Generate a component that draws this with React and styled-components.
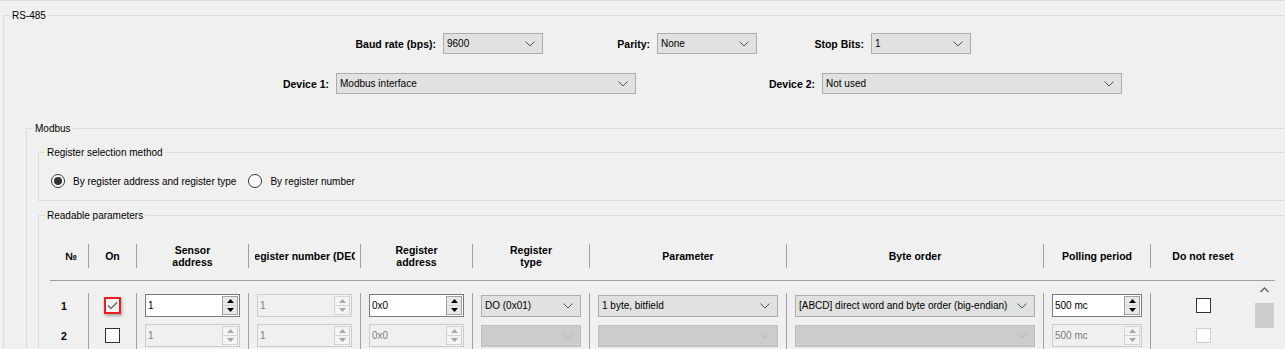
import React from 'react';
import styled, { createGlobalStyle } from 'styled-components';

const GlobalStyle = createGlobalStyle`
  html, body { margin: 0; padding: 0; background: #f0f0f0; overflow: hidden; }
  body { font-family: "Liberation Sans", Arial, sans-serif; font-size: 10px; color: #000; }
  #root { width: 1285px; height: 349px; overflow: hidden; }
`;

const Page = styled.div`
  width: 1285px;
  height: 349px;
  box-sizing: border-box;
  border-top: 1px solid #dadada;
  overflow: hidden;
`;

const Group = styled.fieldset`
  margin: ${p => p.$top}px 0 0 ${p => p.$left || 0}px;
  padding: 0;
  border: 1px solid #dcdcdc;
  border-right: none;
  border-bottom: ${p => (p.$closed ? '1px solid #dcdcdc' : 'none')};
  min-width: 0;
`;

const Legend = styled.legend`
  margin-left: 6px;
  padding: 0 2px;
  font-size: 10px;
  line-height: 13px;
  height: 13px;
`;

const GroupBody = styled.div`
  padding: ${p => p.$pad};
`;

const FormRow = styled.div`
  display: flex;
  align-items: center;
  margin: ${p => p.$mt || 0}px 0 0 ${p => p.$ml}px;
`;

const FieldLabel = styled.label`
  width: ${p => p.$w}px;
  box-sizing: border-box;
  padding-right: 7px;
  text-align: right;
  font-weight: bold;
  font-size: 10.5px;
  white-space: nowrap;
`;

const ComboBox = styled.div`
  width: ${p => p.$w}px;
  height: ${p => p.$h || 21}px;
  box-sizing: border-box;
  display: flex;
  align-items: center;
  padding-left: 3px;
  background: ${p => (p.$disabled ? '#cccccc' : '#e1e1e1')};
  border: 1px solid ${p => (p.$disabled ? '#bfbfbf' : '#adadad')};
`;

const ComboText = styled.span`
  flex: 1;
  min-width: 0;
  overflow: hidden;
  white-space: nowrap;
`;

const ChevronIcon = styled.svg`
  flex: none;
  margin: 1px 7px 0 6px;
`;

const Chevron = ({ disabled }) => (
  <ChevronIcon width="10" height="6" viewBox="0 0 10 6">
    <path d="M0.5 0.5 L5 5 L9.5 0.5" fill="none" stroke={disabled ? '#b4b4b4' : '#505050'} strokeWidth="1" />
  </ChevronIcon>
);

const Combo = ({ w, h, value, disabled }) => (
  <ComboBox $w={w} $h={h} $disabled={disabled}>
    <ComboText>{value}</ComboText>
    <Chevron disabled={disabled} />
  </ComboBox>
);

const Field = ({ label, labelW, value, w }) => (
  <>
    <FieldLabel $w={labelW}>{label}</FieldLabel>
    <Combo w={w} value={value} />
  </>
);

const RadioRow = styled.div`
  display: flex;
  align-items: center;
  gap: 12px;
`;

const RadioOption = styled.label`
  display: flex;
  align-items: center;
  gap: 8px;
`;

const RadioMark = styled.span`
  width: 14px;
  height: 14px;
  box-sizing: border-box;
  border-radius: 50%;
  border: 1px solid #333;
  background: #fff;
  display: flex;
  align-items: center;
  justify-content: center;
  &::after {
    content: '';
    display: ${p => (p.$checked ? 'block' : 'none')};
    width: 8px;
    height: 8px;
    border-radius: 50%;
    background: #333;
  }
`;

const COLS = '38px 48px 112px 112px 112px 117px 197px 257px 107px 105px';

const Table = styled.div`
  width: 1225px;
`;

const HeaderRow = styled.div`
  display: grid;
  grid-template-columns: ${COLS} 20px;
  padding: 22px 0 12px;
  border-bottom: 1px solid #a0a0a0;
`;

const HeadCell = styled.div`
  height: 24px;
  box-sizing: border-box;
  display: flex;
  align-items: center;
  justify-content: center;
  text-align: center;
  border-left: ${p => (p.$sep ? '1px solid #a0a0a0' : 'none')};
  padding-left: ${p => p.$pl || 0}px;
  font-weight: bold;
  font-size: 10.5px;
  line-height: 12px;
`;

const HeadClip = styled.div`
  width: 100px;
  overflow: hidden;
  display: flex;
  justify-content: center;
  white-space: nowrap;
`;

const HeadText = styled.span`
  flex: none;
`;

const BodyWrap = styled.div`
  display: flex;
`;

const Rows = styled.div`
  width: 1205px;
  padding-top: 12px;
`;

const Row = styled.div`
  display: grid;
  grid-template-columns: ${COLS};
  height: 30px;
`;

const Cell = styled.div`
  box-sizing: border-box;
  display: flex;
  align-items: center;
  justify-content: center;
  padding: 1px ${p => p.$pr || 0}px 6px 0;
  border-left: ${p => (p.$sep ? '1px solid #a0a0a0' : 'none')};
  min-width: 0;
`;

const RowNum = styled.span`
  font-weight: bold;
  font-size: 10.5px;
`;

const SpinBox = styled.div`
  width: ${p => p.$w}px;
  height: 23px;
  box-sizing: border-box;
  display: flex;
  border: 1px solid ${p => (p.$disabled ? '#cccccc' : '#7a7a7a')};
  background: ${p => (p.$disabled ? '#f0f0f0' : '#ffffff')};
  color: ${p => (p.$disabled ? '#7d7d7d' : '#000')};
`;

const SpinText = styled.span`
  flex: 1;
  display: flex;
  align-items: center;
  padding-left: 2px;
  white-space: nowrap;
`;

const SpinButtons = styled.div`
  width: 16px;
  margin: 1px;
  box-sizing: border-box;
  display: flex;
  flex-direction: column;
  border: 1px solid ${p => (p.$disabled ? '#d4d4d4' : '#a0a0a0')};
`;

const SpinButton = styled.div`
  flex: 1;
  display: flex;
  align-items: center;
  justify-content: center;
  background: ${p => (p.$disabled ? '#f4f4f4' : '#e8e8e8')};
  & + & {
    border-top: 1px solid ${p => (p.$disabled ? '#d4d4d4' : '#a0a0a0')};
  }
`;

const Arrow = ({ up, disabled }) => (
  <svg width="7" height="4" viewBox="0 0 7 4">
    <path d={up ? 'M0 4 L3.5 0 L7 4 Z' : 'M0 0 L3.5 4 L7 0 Z'} fill={disabled ? '#a8a8a8' : '#000'} />
  </svg>
);

const Spin = ({ w, value, disabled }) => (
  <SpinBox $w={w} $disabled={disabled}>
    <SpinText>{value}</SpinText>
    <SpinButtons $disabled={disabled}>
      <SpinButton $disabled={disabled}><Arrow up disabled={disabled} /></SpinButton>
      <SpinButton $disabled={disabled}><Arrow disabled={disabled} /></SpinButton>
    </SpinButtons>
  </SpinBox>
);

const CheckBox = styled.span`
  width: 15px;
  height: 15px;
  box-sizing: border-box;
  display: inline-flex;
  align-items: center;
  justify-content: center;
  background: #fff;
  border: 1px solid ${p => (p.$disabled ? '#cccccc' : '#333333')};
`;

const FocusCheckBox = styled(CheckBox)`
  width: 17px;
  height: 17px;
  border: 2px solid #ee1c1c;
  background: #f3f3f3;
  box-shadow: 1px 2px 3px rgba(0, 0, 0, 0.3);
`;

const CheckMark = () => (
  <svg width="11" height="9" viewBox="0 0 11 9">
    <path d="M1 4.5 L4 7.5 L10 1.5" fill="none" stroke="#5a5a5a" strokeWidth="1.2" />
  </svg>
);

const ScrollBar = styled.div`
  width: 20px;
  display: flex;
  flex-direction: column;
  align-items: flex-start;
`;

const ScrollArrow = styled.div`
  width: 19px;
  height: 18px;
  display: flex;
  align-items: center;
  justify-content: center;
`;

const ScrollThumb = styled.div`
  width: 19px;
  height: 25px;
  margin-top: 4px;
  background: #cdcdcd;
`;

const rows = [
  {
    n: 1, on: 'focus',
    sensor: { v: '1' }, regNum: { v: '1', d: true }, regAddr: { v: '0x0' },
    regType: { v: 'DO (0x01)' }, param: { v: '1 byte, bitfield' },
    order: { v: '[ABCD] direct word and byte order (big-endian)' },
    poll: { v: '500 mc' }, reset: { d: false },
  },
  {
    n: 2, on: 'plain',
    sensor: { v: '1', d: true }, regNum: { v: '1', d: true }, regAddr: { v: '0x0', d: true },
    regType: { v: '', d: true }, param: { v: '', d: true }, order: { v: '', d: true },
    poll: { v: '500 mc', d: true }, reset: { d: true },
  },
];

export default function App() {
  return (
    <>
      <GlobalStyle />
      <Page>
        <Group $top={8} $left={3}>
          <Legend>RS-485</Legend>
          <GroupBody $pad="11px 0 0 22px">
            <FormRow $ml={303}>
              <Field label="Baud rate (bps):" labelW={114} value="9600" w={100} />
              <Field label="Parity:" labelW={114} value="None" w={100} />
              <Field label="Stop Bits:" labelW={114} value="1" w={100} />
            </FormRow>
            <FormRow $ml={196} $mt={19}>
              <Field label="Device 1:" labelW={114} value="Modbus interface" w={300} />
              <Field label="Device 2:" labelW={186} value="Not used" w={300} />
            </FormRow>

            <Group $top={28}>
              <Legend>Modbus</Legend>
              <GroupBody $pad="0 0 0 11px">
                <Group $top={11} $closed>
                  <Legend>Register selection method</Legend>
                  <GroupBody $pad="15px 0 12px 12px">
                    <RadioRow>
                      <RadioOption><RadioMark $checked />By register address and register type</RadioOption>
                      <RadioOption><RadioMark />By register number</RadioOption>
                    </RadioRow>
                  </GroupBody>
                </Group>

                <Group $top={8}>
                  <Legend>Readable parameters</Legend>
                  <GroupBody $pad="0 0 0 11px">
                    <Table>
                      <HeaderRow>
                        <HeadCell $pl={4}>№</HeadCell>
                        <HeadCell $sep>On</HeadCell>
                        <HeadCell $sep>Sensor<br />address</HeadCell>
                        <HeadCell $sep>
                          <HeadClip><HeadText>Register number (DEC)</HeadText></HeadClip>
                        </HeadCell>
                        <HeadCell $sep>Register<br />address</HeadCell>
                        <HeadCell $sep>Register<br />type</HeadCell>
                        <HeadCell $sep>Parameter</HeadCell>
                        <HeadCell $sep>Byte order</HeadCell>
                        <HeadCell $sep>Polling period</HeadCell>
                        <HeadCell $sep>Do not reset</HeadCell>
                        <HeadCell />
                      </HeaderRow>
                      <BodyWrap>
                        <Rows>
                          {rows.map(r => (
                            <Row key={r.n}>
                              <Cell $pr={10}><RowNum>{r.n}</RowNum></Cell>
                              <Cell $sep>
                                {r.on === 'focus' ? (
                                  <FocusCheckBox><CheckMark /></FocusCheckBox>
                                ) : (
                                  <CheckBox />
                                )}
                              </Cell>
                              <Cell $sep><Spin w={95} value={r.sensor.v} disabled={r.sensor.d} /></Cell>
                              <Cell $sep><Spin w={95} value={r.regNum.v} disabled={r.regNum.d} /></Cell>
                              <Cell $sep><Spin w={95} value={r.regAddr.v} disabled={r.regAddr.d} /></Cell>
                              <Cell $sep><Combo w={100} h={22} value={r.regType.v} disabled={r.regType.d} /></Cell>
                              <Cell $sep><Combo w={180} h={22} value={r.param.v} disabled={r.param.d} /></Cell>
                              <Cell $sep><Combo w={240} h={22} value={r.order.v} disabled={r.order.d} /></Cell>
                              <Cell $sep><Spin w={90} value={r.poll.v} disabled={r.poll.d} /></Cell>
                              <Cell $sep><CheckBox $disabled={r.reset.d} /></Cell>
                            </Row>
                          ))}
                        </Rows>
                        <ScrollBar>
                          <ScrollArrow>
                            <svg width="9" height="6" viewBox="0 0 9 6">
                              <path d="M0.5 5 L4.5 1 L8.5 5" fill="none" stroke="#606060" strokeWidth="1.3" />
                            </svg>
                          </ScrollArrow>
                          <ScrollThumb />
                        </ScrollBar>
                      </BodyWrap>
                    </Table>
                  </GroupBody>
                </Group>
              </GroupBody>
            </Group>
          </GroupBody>
        </Group>
      </Page>
    </>
  );
}
